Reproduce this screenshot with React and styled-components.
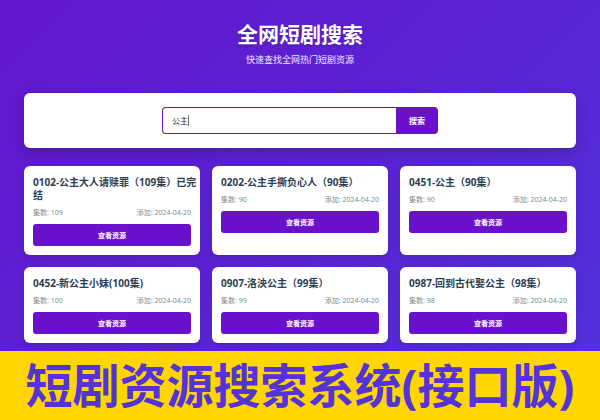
import React, { useState } from 'react';
import styled, { createGlobalStyle } from 'styled-components';

const GlobalStyle = createGlobalStyle`
  *, *::before, *::after { box-sizing: border-box; }
  body {
    margin: 0;
    font-family: "Noto Sans", "Noto Sans CJK SC", sans-serif;
    color: #2c3e50;
  }
  h1, h2, p { margin: 0; }
  button, input { font-family: inherit; }
`;

const Page = styled.main`
  padding: 20px 24px 8px;
  background: linear-gradient(135deg, #6316ce 0%, #5b22d3 50%, #5231db 100%);
`;

const Header = styled.header`
  display: flex;
  flex-direction: column;
  align-items: center;
  gap: 6px;
  margin-bottom: 27px;
  color: #fff;
  text-align: center;
`;

const SiteTitle = styled.h1`
  font-size: 21px;
  line-height: 28px;
  font-weight: 700;
  text-shadow: 0 1px 2px rgba(0, 0, 0, 0.25);
`;

const Tagline = styled.p`
  font-size: 9px;
  line-height: 12px;
  color: #f0e9fc;
`;

const SearchPanel = styled.section`
  display: flex;
  justify-content: center;
  padding: 14px;
  margin-bottom: 18px;
  border-radius: 6px;
  background: #fff;
  box-shadow: 0 5px 14px rgba(0, 0, 0, 0.2);
`;

const SearchForm = styled.form`
  display: flex;
  flex: 0 1 276px;
  height: 27px;
`;

const SearchField = styled.label`
  position: relative;
  display: flex;
  flex: 1;
  min-width: 0;
`;

const SearchInput = styled.input`
  width: 100%;
  min-width: 0;
  padding: 0 9px;
  border: 1px solid #6a11cb;
  border-right: 0;
  border-radius: 4px 0 0 4px;
  outline: none;
  background: #fff;
  color: #222;
  font-size: 8px;
`;

const Caret = styled.span`
  position: absolute;
  top: 8px;
  left: 26px;
  width: 1px;
  height: 11px;
  background: #777;
`;

const SearchButton = styled.button`
  width: 42px;
  padding: 0;
  border: 0;
  border-radius: 0 4px 4px 0;
  background: #6a11cb;
  color: #fff;
  font-size: 8px;
  font-weight: 700;
  cursor: pointer;
`;

const ResultGrid = styled.section`
  display: grid;
  grid-template-columns: repeat(3, minmax(0, 1fr));
  gap: 12px;
`;

const Card = styled.article`
  padding: 10px 9px 9px;
  border-radius: 6px;
  background: #fff;
  box-shadow: 0 3px 8px rgba(0, 0, 0, 0.12);
`;

const CardTitle = styled.h2`
  margin-right: -6px;
  font-size: 10px;
  line-height: 13px;
  font-weight: 700;
  color: #2c3e50;
`;

const Meta = styled.div`
  display: flex;
  justify-content: space-between;
  margin: 6px 0 7px;
  font-size: 7px;
  line-height: 9px;
  color: #7f8c8d;
`;

const ViewButton = styled.button`
  display: block;
  width: 100%;
  height: 22px;
  padding: 0;
  border: 0;
  border-radius: 3px;
  background: #6a11cb;
  color: #fff;
  font-size: 7px;
  font-weight: 700;
  cursor: pointer;
`;

const Banner = styled.footer`
  background: #ffd600;
  color: #5433d8;
  font-size: 47px;
  line-height: 69px;
  font-weight: 700;
  text-align: center;
  white-space: nowrap;
`;

const dramas = [
  { title: '0102-公主大人请赎罪（109集）已完结', episodes: 109, added: '2024-04-20' },
  { title: '0202-公主手撕负心人（90集）', episodes: 90, added: '2024-04-20' },
  { title: '0451-公主（90集）', episodes: 90, added: '2024-04-20' },
  { title: '0452-新公主小妹(100集)', episodes: 100, added: '2024-04-20' },
  { title: '0907-洛泱公主（99集）', episodes: 99, added: '2024-04-20' },
  { title: '0987-回到古代娶公主（98集）', episodes: 98, added: '2024-04-20' },
];

function DramaCard({ title, episodes, added }) {
  return (
    <Card>
      <CardTitle>{title}</CardTitle>
      <Meta>
        <span>集数: {episodes}</span>
        <span>添加: {added}</span>
      </Meta>
      <ViewButton type="button">查看资源</ViewButton>
    </Card>
  );
}

export default function App() {
  const [query, setQuery] = useState('公主');

  return (
    <>
      <GlobalStyle />
      <Page>
        <Header>
          <SiteTitle>全网短剧搜索</SiteTitle>
          <Tagline>快速查找全网热门短剧资源</Tagline>
        </Header>
        <SearchPanel>
          <SearchForm onSubmit={(event) => event.preventDefault()}>
            <SearchField>
              <SearchInput
                type="text"
                aria-label="搜索"
                value={query}
                onChange={(event) => setQuery(event.target.value)}
              />
              {query === '公主' && <Caret aria-hidden="true" />}
            </SearchField>
            <SearchButton type="submit">搜索</SearchButton>
          </SearchForm>
        </SearchPanel>
        <ResultGrid>
          {dramas.map((drama) => (
            <DramaCard key={drama.title} {...drama} />
          ))}
        </ResultGrid>
      </Page>
      <Banner>短剧资源搜索系统(接口版)</Banner>
    </>
  );
}
